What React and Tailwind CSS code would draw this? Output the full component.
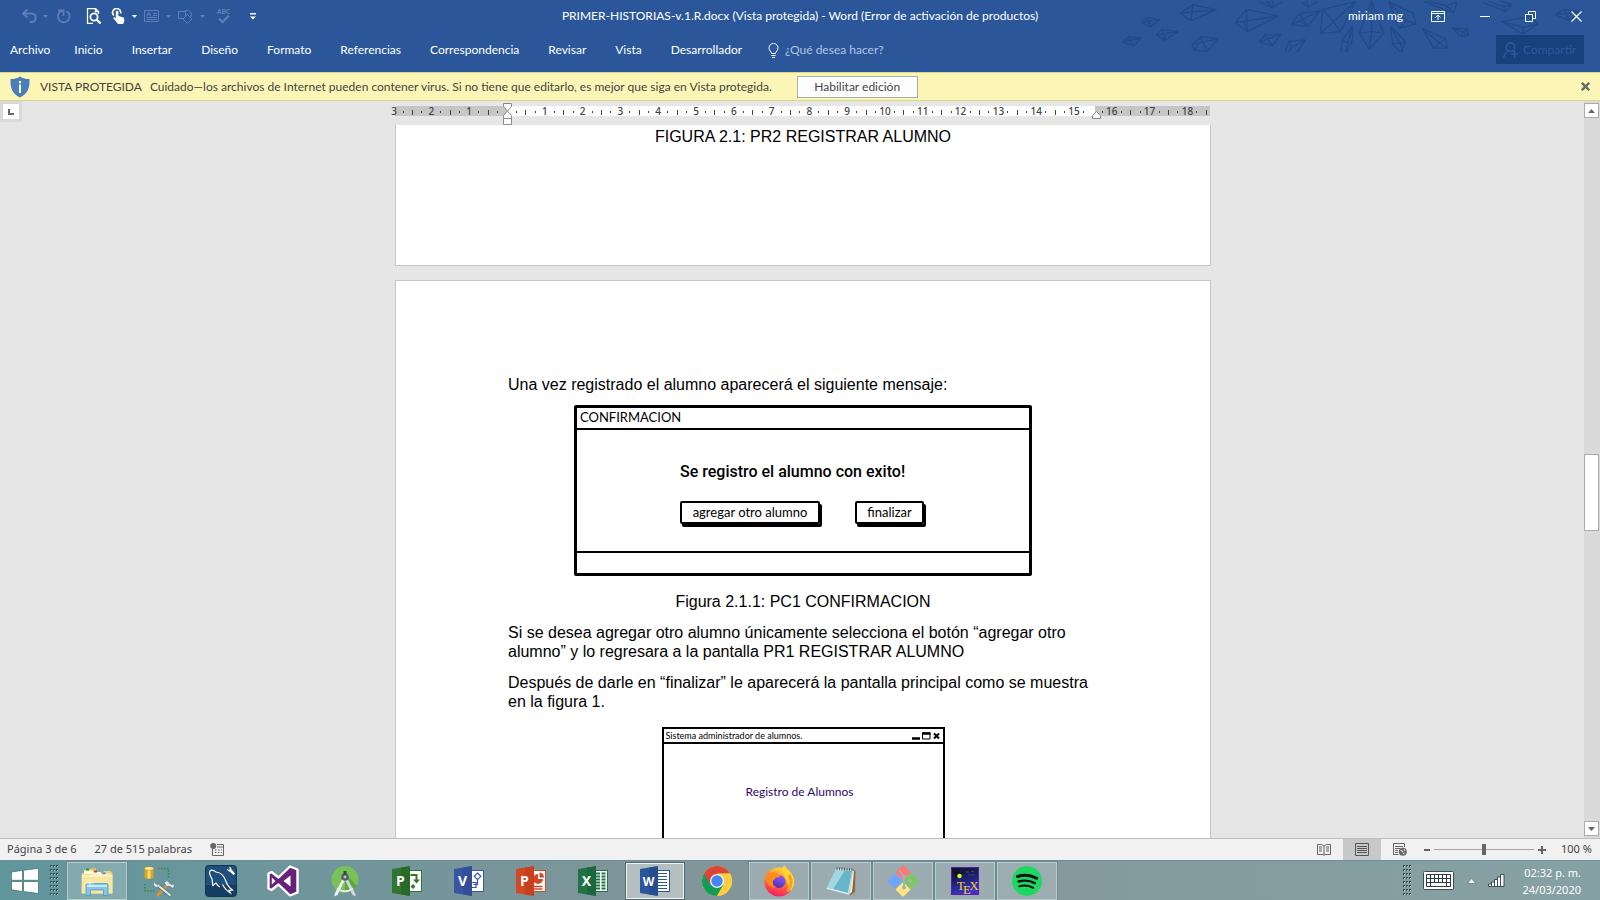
import React from 'react';

const TABS = ['Inicio', 'Insertar', 'Diseño', 'Formato', 'Referencias', 'Correspondencia', 'Revisar', 'Vista', 'Desarrollador'];

/* ---------- Title bar ---------- */

function Caret({ className = '' }) {
  return (
    <button type="button" aria-label="Más opciones" className={`flex w-3.5 justify-center ${className}`}>
      <svg width="5" height="3" viewBox="0 0 5 3" aria-hidden="true">
        <path d="M0 0h5L2.5 3z" fill="currentColor" />
      </svg>
    </button>
  );
}

function QuickButton({ label, className = '', children }) {
  return (
    <button type="button" aria-label={label} className={`size-4 ${className}`}>
      <svg width="16" height="16" viewBox="0 0 16 16" fill="none" stroke="currentColor" aria-hidden="true">
        {children}
      </svg>
    </button>
  );
}

function QuickAccess() {
  return (
    <div className="flex items-center pl-[22px] text-[#5b7fb5]">
      <QuickButton label="Deshacer">
        <path d="M5.5 1.5 1 5.5l4.5 4M1 5.500h8c3 0 4.700 1.800 4.700 4.200S12 14 9 14H7.500" strokeWidth="2" />
      </QuickButton>
      <Caret />
      <QuickButton label="Rehacer" className="ml-1">
        <path d="M10.500 3.300A5.800 5.800 0 1 1 3.800 4.200L6.500 2.800M2 2.500h5.500V8" strokeWidth="1.800" />
      </QuickButton>
      <QuickButton label="Vista previa de impresión" className="ml-3.5 text-white">
        <path d="M7 15.500H1.500V.5h8l3 3V6M9.500.5v3h3" strokeWidth="1.300" />
        <circle cx="8" cy="9" r="3.600" strokeWidth="1.800" />
        <path d="m10.500 11.500 4 4" strokeWidth="2.400" />
      </QuickButton>
      <QuickButton label="Modo mouse o toque" className="ml-[9px] text-white">
        <path d="M3 7.500A4 4 0 1 1 9.500 5.500" strokeWidth="1.600" />
        <path
          d="M4.800 3.800c0-1.400 2.600-1.400 2.600 0V8l4.500 1.300c1 .3 1.300.9 1.300 1.700v2l-1 3H7l-4.500-5.500c-.6-.9.600-1.700 1.400-1l.9.800z"
          fill="currentColor"
          stroke="none"
        />
      </QuickButton>
      <Caret className="text-white" />
      <QuickButton label="Cuadro de texto" className="ml-[3px]">
        <path d="M.5 2.500h14v11H.5z" />
        <path d="M9 5.500h4M9 7.500h4M2.500 9.500H13M2.500 11.500H13M2.700 8.200 4.800 4l2.100 4.200M3.500 6.700h2.600" />
      </QuickButton>
      <Caret className="ml-px" />
      <QuickButton label="Formas" className="ml-[3px]">
        <path d="M.5 3.500h7v7h-7zM5.500 4a4.300 4.300 0 1 1 7 5.500" />
        <path d="m9.500 6.500 4.500 4.500-4.500 4.500L5 11z" fill="#2b579a" />
      </QuickButton>
      <Caret className="ml-px" />
      <QuickButton label="Ortografía" className="ml-[7px]">
        <text x="1" y="5.500" fontFamily="Noto Sans, sans-serif" fontSize="6.500" fontWeight="700" fill="currentColor" stroke="none">
          ABC
        </text>
        <path d="m3 10.500 3.500 3.500L13 7.500" strokeWidth="2.400" />
      </QuickButton>
      <button type="button" aria-label="Personalizar barra de acceso rápido" className="ml-3.5 flex w-3.5 justify-center text-white">
        <svg width="6" height="7" viewBox="0 0 6 7" aria-hidden="true">
          <path d="M0 0h6v1.500H0zM0 3.500h6l-3 3z" fill="currentColor" />
        </svg>
      </button>
    </div>
  );
}

function HeaderPattern() {
  return (
    <svg
      className="pointer-events-none absolute top-0 right-0"
      width="500"
      height="52"
      viewBox="0 0 1500 156"
      fill="none"
      stroke="#214b88"
      strokeWidth="4"
      strokeLinejoin="round"
      aria-hidden="true"
    >
      <path d="M125 68 140 52 179 59 151 81ZM125 68 179 59M140 52 151 81 148 66" />
      <path d="M169 104 186 88 234 95 193 121ZM169 104 234 95M186 88 193 121 200 99" />
      <path d="M68 126 85 111 122 114 101 138ZM68 126 122 114M85 111 101 138" />
      <path d="M240 39 278 15 349 29 273 62ZM240 39 349 29M278 15 273 62" />
      <path d="M276 134 302 110 354 115 322 155 284 151ZM276 134 354 115M302 110 322 155M300 126 284 151" />
      <path d="M406 68 439 28 535 48 443 95ZM406 68 535 48M439 28 443 95M430 64 443 95" />
      <path d="M479 6 515 23 546 6M500 3 515 23 520 3M606 8 626 21 650 5M620 3 626 21" />
      <path d="M478 126 495 105 542 103 517 138ZM478 126 542 103M495 105 517 138" />
      <path d="M574 74 598 40 662 32 623 79ZM574 74 662 32M598 40 623 79M598 60 623 79" />
      <path d="M556 156 566 125 616 120 592 156M566 125 574 142 616 120M574 142 566 156" />
      <path d="M662 100 668 28 766 5 722 95ZM662 100 700 65 766 5M668 28 700 65 722 95" />
      <path d="M724 155 726 122 757 78 757 120 742 156M726 122 744 128 757 78M744 128 738 156" />
      <path d="M815 3 778 100 808 147 851 100ZM778 100 815 94 851 100M815 3V94L808 147" />
      <path d="M866 5 897 85 948 72 940 40ZM866 5 920 62 948 72M920 62 897 85" />
      <path d="M871 78 878 132 902 156 917 126ZM871 78 900 130 917 126M878 132 900 130 910 156" />
      <path d="M968 86 1001 145 1042 144 1038 117ZM968 86 1018 128 1042 144M1001 145 1018 128 1038 117" />
      <path d="M972 5 1061 39 1071 5M985 3 1040 18 1061 39M1040 18 1071 5" />
      <path d="M1057 83 1083 110 1106 106 1103 87ZM1057 83 1090 97 1106 106M1083 110 1090 97 1103 87" />
      <path d="M1150 8 1217 34 1236 14 1200 3M1165 3 1210 20 1217 34M1210 20 1236 14" />
      <path d="M1206 64 1268 102 1313 72 1290 50ZM1206 64 1270 82 1313 72M1270 82 1268 102" />
      <path d="M1366 43 1393 28 1440 36 1408 62ZM1366 43 1440 36M1393 28 1408 62" />
    </svg>
  );
}

function TitleBar() {
  return (
    <div className="relative grid h-8 grid-cols-[1fr_auto_1fr]">
      <QuickAccess />
      <h1 className="self-center text-center leading-4">
        PRIMER-HISTORIAS-v.1.R.docx (Vista protegida) - Word (Error de activación de productos)
      </h1>
      <div className="flex items-center justify-end pr-[18px]">
        <span className="mr-7 leading-4">miriam mg</span>
        <button type="button" aria-label="Opciones de presentación de la cinta de opciones" className="mr-[35px]">
          <svg width="14" height="11" viewBox="0 0 14 11" fill="none" stroke="currentColor" aria-hidden="true">
            <path d="M.5.5h13v10H.5zM.5 2.500h13M7 9V4.500M4.500 6.500 7 4.200l2.500 2.300" />
          </svg>
        </button>
        <button type="button" aria-label="Minimizar" className="mr-[35px]">
          <svg width="10" height="11" viewBox="0 0 10 11" stroke="currentColor" aria-hidden="true">
            <path d="M0 5.500h10" />
          </svg>
        </button>
        <button type="button" aria-label="Restaurar" className="mr-[35px]">
          <svg width="11" height="11" viewBox="0 0 11 11" fill="none" stroke="currentColor" aria-hidden="true">
            <path d="M.5 3.500h7v7h-7zM3.500 3.500v-3h7v7h-3" />
          </svg>
        </button>
        <button type="button" aria-label="Cerrar">
          <svg width="11" height="11" viewBox="0 0 11 11" stroke="currentColor" strokeWidth="1.200" aria-hidden="true">
            <path d="m.5.5 10 10M10.500.5l-10 10" />
          </svg>
        </button>
      </div>
    </div>
  );
}

function RibbonTabs() {
  return (
    <div className="relative flex h-10 items-start justify-between">
      <div className="flex pt-[9px] pl-2.5 leading-[18px]">
        <nav className="flex">
          <button type="button" className="mr-6">Archivo</button>
          <div className="flex gap-[29px]">
            {TABS.map((t) => (
              <button type="button" key={t}>{t}</button>
            ))}
          </div>
        </nav>
        <div className="ml-[26px] flex items-center gap-1.5">
          <svg width="11" height="15" viewBox="0 0 11 15" fill="none" stroke="#fff" aria-hidden="true">
            <path d="M3.500 10.500C3.500 8.500 1 7.700 1 4.900a4.500 4.500 0 0 1 9 0c0 2.800-2.500 3.600-2.500 5.600zM3.500 12.500h4M4 14.500h3" />
          </svg>
          <input
            type="text"
            aria-label="¿Qué desea hacer?"
            placeholder="¿Qué desea hacer?"
            className="h-[18px] w-32 bg-transparent p-0 outline-none placeholder:text-[#b4c5e2]"
          />
        </div>
      </div>
      <button
        type="button"
        disabled
        className="mt-[3px] mr-4 flex h-[29px] w-[88px] items-center gap-1 bg-[#15417d] pl-[7px] text-[#2b5a9d]"
      >
        <svg width="16" height="16" viewBox="0 0 16 16" fill="none" stroke="currentColor" strokeWidth="1.400" aria-hidden="true">
          <circle cx="7.500" cy="5" r="4.200" />
          <path d="M.7 15.500c.3-3 1.800-5 4.300-6.500M8 12h7M11.500 8.500v7M9 8.800l1.500.7" />
        </svg>
        <span className="leading-4">Compartir</span>
      </button>
    </div>
  );
}

function ProtectedBar() {
  return (
    <div className="flex h-[29px] shrink-0 items-center border-y border-[#d9d78b] bg-[#fcf6b6] pr-2.5 pl-2.5 text-[#444]">
      <svg width="20" height="22" viewBox="0 0 20 22" aria-hidden="true">
        <path d="M10 .5C7.500 2.500 3.500 3 .5 3c-.3 8.500 1.500 15 9.500 18.500C18 18 19.800 11.500 19.500 3c-3 0-7-.5-9.500-2.500z" fill="#4a7ebb" />
        <path d="M9 5h2v2.200H9zM9 8.500h2V17H9z" fill="#fff" />
      </svg>
      <span className="ml-2.5">VISTA PROTEGIDA</span>
      <span className="ml-2">
        Cuidado—los archivos de Internet pueden contener virus. Si no tiene que editarlo, es mejor que siga en Vista protegida.
      </span>
      <button type="button" className="ml-[25px] h-[22px] w-[121px] border border-[#ababab] bg-[#fdfdfd]">
        Habilitar edición
      </button>
      <button type="button" aria-label="Cerrar mensaje" className="ml-auto">
        <svg width="9" height="9" viewBox="0 0 9 9" stroke="#6a6a6a" strokeWidth="2.400" aria-hidden="true">
          <path d="m.8.8 7.400 7.400M8.200.8.800 8.200" />
        </svg>
      </button>
    </div>
  );
}

/* ---------- Ruler ---------- */

const CM = 37.8;
const ORIGIN = 112.5;

function Ruler() {
  const marks = [];
  for (let q = -11; q <= 74; q += 1) {
    const x = ORIGIN + (q * CM) / 4;
    if (q === 0 || q === 62) continue;
    if (q % 4 === 0) {
      marks.push(
        <text key={q} x={x - 0.5} y="14" textAnchor="middle">{Math.abs(q / 4)}</text>
      );
    } else if (q % 2 === 0) {
      marks.push(<rect key={q} x={Math.round(x) - 1} y="9" width="1" height="5" />);
    } else {
      marks.push(<rect key={q} x={Math.round(x) - 1} y="10" width="1" height="2" />);
    }
  }
  return (
    <svg
      width="816"
      height="24"
      viewBox="0 0 816 24"
      className="mx-auto block overflow-visible"
      fontFamily="Noto Sans, sans-serif"
      fontSize="10"
      fontWeight="500"
      fill="#444"
      role="img"
      aria-label="Regla"
    >
      <rect x="0" y="5" width="815" height="10" fill="#c6c6c6" />
      <rect x="112" y="5" width="588" height="10" fill="#fff" />
      <text x={ORIGIN - 3 * CM} y="14" textAnchor="middle">3</text>
      {marks}
      <g fill="#fff" stroke="#8a8a8a">
        <path d="M108.500 2.500h8v3l-4 4.500-4-4.500zM108.500 17.500v-3l4-4.500 4 4.500v3zM108.500 17.500h8v6h-8z" />
        <path d="M697.500 17.500v-3l4-4 4 4v3z" />
      </g>
    </svg>
  );
}

/* ---------- Document ---------- */

function ConfirmationMock() {
  return (
    <div className="mx-auto mt-[11px] flex h-[171px] w-[458px] flex-col rounded-xs border-[3px] border-black font-[Lato,sans-serif] text-[13px] leading-4 text-black">
      <div className="border-b-2 border-black pt-px pb-[3px] pl-[3px]">CONFIRMACION</div>
      <div className="flex-1 pt-[31px] pl-[103px]">
        <p className="font-[Roboto,sans-serif] text-base leading-[21px] font-medium">Se registro el alumno con exito!</p>
        <div className="mt-[19px] flex gap-[35px]">
          <button type="button" className="h-[23px] w-[140px] rounded-xs border-2 border-black pb-px shadow-[2px_3px_0_#000]">
            agregar otro alumno
          </button>
          <button type="button" className="h-[23px] w-[69px] rounded-xs border-2 border-black pb-px shadow-[2px_3px_0_#000]">
            finalizar
          </button>
        </div>
      </div>
      <div className="h-[22px] border-t-2 border-black" />
    </div>
  );
}

function SystemMock() {
  return (
    <div className="mx-auto mt-4 h-72 w-[283px] border-2 border-black font-[Lato,sans-serif] text-black">
      <div className="flex h-[15px] items-center justify-between border-b-2 border-black pr-[3px] pl-0.5 text-[9px] leading-3">
        <span>Sistema administrador de alumnos.</span>
        <svg width="28" height="8" viewBox="0 0 28 8" fill="none" stroke="#000" aria-hidden="true">
          <path d="M0 6.500h8" strokeWidth="2.500" />
          <path d="M10.500 7V1h7.500v6z" />
          <path d="M10 1.500h8.500" strokeWidth="2.500" />
          <path d="m22 1.500 5 5M27 1.500l-5 5" strokeWidth="2" />
        </svg>
      </div>
      <p className="pt-10 pl-[82px] text-xs leading-4 text-[#2b0a6e]">Registro de Alumnos</p>
    </div>
  );
}

function Document() {
  return (
    <div className="flex min-h-0 flex-1 bg-[#e6e6e6]">
      <div className="w-[22px] shrink-0">
        <button type="button" aria-label="Tabulación izquierda" className="flex h-[21px] w-full items-center justify-center border-3 border-[#dadada] bg-white">
          <svg width="6" height="6" viewBox="0 0 6 6" fill="none" stroke="#666" strokeWidth="2" aria-hidden="true">
            <path d="M1 0v5h5" />
          </svg>
        </button>
      </div>
      <div className="flex min-w-0 flex-1 flex-col">
        <Ruler />
        <div className="flex min-h-0 flex-1 flex-col overflow-hidden font-['Liberation_Sans',Arial,sans-serif] text-base leading-[19px] text-black">
          <section className="mx-auto h-[141px] w-[816px] shrink-0 border border-t-0 border-[#c6c6c6] bg-white pt-0.5">
            <p className="text-center">FIGURA 2.1: PR2 REGISTRAR ALUMNO</p>
          </section>
          <section className="mx-auto mt-3.5 w-[816px] shrink-0 border border-[#c6c6c6] bg-white px-28 pt-[94px]">
            <p>Una vez registrado el alumno aparecerá el siguiente mensaje:</p>
            <ConfirmationMock />
            <p className="mt-4 text-center">Figura 2.1.1: PC1 CONFIRMACION</p>
            <p className="mt-3">
              Si se desea agregar otro alumno únicamente selecciona el botón “agregar otro alumno” y lo regresara a la
              pantalla PR1 REGISTRAR ALUMNO
            </p>
            <p className="mt-3">
              Después de darle en “finalizar” le aparecerá la pantalla principal como se muestra en la figura 1.
            </p>
            <SystemMock />
          </section>
        </div>
      </div>
      <div className="flex w-4 shrink-0 flex-col bg-[#dadada] pt-0.5 pr-px pb-0.5">
        <button type="button" aria-label="Desplazar hacia arriba" className="flex h-[15px] items-center justify-center border border-[#ababab] bg-white">
          <svg width="7" height="4" viewBox="0 0 7 4" aria-hidden="true">
            <path d="M3.500 0 7 4H0z" fill="#666" />
          </svg>
        </button>
        <div className="flex flex-1 flex-col">
          <div className="grow-337" />
          <div className="h-[77px] border border-[#ababab] bg-white" />
          <div className="grow-290" />
        </div>
        <button type="button" aria-label="Desplazar hacia abajo" className="flex h-[15px] items-center justify-center border border-[#ababab] bg-white">
          <svg width="7" height="4" viewBox="0 0 7 4" aria-hidden="true">
            <path d="M0 0h7L3.500 4z" fill="#666" />
          </svg>
        </button>
      </div>
    </div>
  );
}

/* ---------- Status bar ---------- */

function StatusBar() {
  return (
    <div className="flex h-[22px] shrink-0 items-center border-t border-[#bdbdbd] bg-[#f1f1f1] pr-[9px] pl-[7px] font-['Noto_Sans',sans-serif] text-[11px] text-[#444]">
      <span>Página 3 de 6</span>
      <span className="ml-[18px]">27 de 515 palabras</span>
      <button type="button" aria-label="Grabar macro" className="ml-[18px]">
        <svg width="14" height="13" viewBox="0 0 14 13" fill="none" stroke="#666" aria-hidden="true">
          <path d="M7 1.500h6.500v11h-11V6M7 4h6.500" />
          <path d="M5 7h1.500M8 7h1.500M11 7h1M5 9.500h1.500M8 9.500h1.500M11 9.500h1" />
          <circle cx="3.200" cy="3" r="3" fill="#666" stroke="none" />
        </svg>
      </button>
      <div className="ml-auto flex h-full items-center">
        <button type="button" aria-label="Modo de lectura" className="flex h-full w-[38px] items-center justify-center">
          <svg width="14" height="13" viewBox="0 0 14 13" fill="none" stroke="#666" aria-hidden="true">
            <path d="M6.500 11.500h-6V1.500h4L7 3l2.500-1.500h4v10h-6M7 3v10" />
            <path d="M2 4h3M2 6h3M2 8h3M9 4h3M9 6h3M9 8h3" />
          </svg>
        </button>
        <button type="button" aria-label="Diseño de impresión" className="flex h-full w-[38px] items-center justify-center bg-[#c8c8c8]">
          <svg width="14" height="13" viewBox="0 0 14 13" fill="none" stroke="#555" aria-hidden="true">
            <path d="M.5.5h13v12H.5zM2 3.500h10M2 5.500h10M2 7.500h10M2 9.500h10" />
          </svg>
        </button>
        <button type="button" aria-label="Diseño web" className="flex h-full w-[38px] items-center justify-center">
          <svg width="14" height="13" viewBox="0 0 14 13" fill="none" stroke="#666" aria-hidden="true">
            <path d="M5.500 11.500h-5V.5h11V4M2 3.500h8M2 5.500h5M2 7.500h3M2 9.500h3" />
            <circle cx="9.800" cy="8.800" r="4" fill="#666" stroke="none" />
            <path d="M7.500 7.500l2 .5.5 1.500M11 6l1 2M10 11l1.500-.8" stroke="#f1f1f1" />
          </svg>
        </button>
        <button type="button" aria-label="Alejar" className="ml-[5px]">
          <svg width="6" height="8" viewBox="0 0 6 8" stroke="#666" strokeWidth="2" aria-hidden="true">
            <path d="M0 4h6" />
          </svg>
        </button>
        <input
          type="range"
          aria-label="Zoom"
          min="0"
          max="100"
          defaultValue="50"
          className="mx-1 h-3 w-[100px] appearance-none bg-[linear-gradient(#a6a6a6,#a6a6a6)] bg-[length:100%_1px] bg-center bg-no-repeat [&::-webkit-slider-thumb]:h-[11px] [&::-webkit-slider-thumb]:w-1 [&::-webkit-slider-thumb]:appearance-none [&::-webkit-slider-thumb]:bg-[#666]"
        />
        <button type="button" aria-label="Acercar">
          <svg width="8" height="8" viewBox="0 0 8 8" stroke="#666" strokeWidth="2" aria-hidden="true">
            <path d="M0 4h8M4 0v8" />
          </svg>
        </button>
        <span className="ml-[15px] w-[30px] text-right whitespace-nowrap">100 %</span>
      </div>
    </div>
  );
}

/* ---------- Taskbar ---------- */

function Grip() {
  return (
    <svg width="9" height="31" viewBox="0 0 9 31" aria-hidden="true">
      {[0, 4, 8, 12, 16, 20, 24, 28].map((y) => (
        <g key={y}>
          <path d={`M0 ${y}h2v2H0zM3 ${y}h2v2H3zM6 ${y}h2v2H6z`} fill="#2f4d50" />
          <path d={`M1 ${y + 1}h1v1H1zM4 ${y + 1}h1v1H4zM7 ${y + 1}h1v1H7z`} fill="#b9cdd0" />
        </g>
      ))}
    </svg>
  );
}

function OfficeIcon({ color, dark, letter, children }) {
  return (
    <g>
      <rect x="14.500" y="5.500" width="16" height="21" fill="#fff" stroke={color} />
      {children}
      <path d="M1 4 19 1v30L1 28z" fill={color} />
      <path d="M10 2.500 19 1v30l-9-1.500z" fill={dark} opacity=".4" />
      <text x="9.500" y="20.500" textAnchor="middle" fontFamily="Open Sans, sans-serif" fontWeight="700" fontSize={letter === 'W' ? 12 : 14} fill="#fff">
        {letter}
      </text>
    </g>
  );
}

const APPS = [
  {
    name: 'Explorador de archivos',
    state: 'open',
    icon: (
      <g>
        <path d="M3 5h5l1-1.500h6V27H3z" fill="#e9c95f" />
        <path d="M1 8h20l2-2h7l1.500 2v19c0 1-.5 1.500-1.500 1.500H2C1 28.500.5 28 .5 27z" fill="#eecf6e" />
        <path d="M3 5.500h9V9H3zM11 7h9v3h-9zM19 8.500h10V12H19z" fill="#fff8dc" />
        <path d="M5 3.500h3v2H5z" fill="#17a12b" />
        <path d="M13 5.500h3v2h-3z" fill="#d23a2e" />
        <path d="M21.500 7.500h3v2h-3z" fill="#2c8fe0" />
        <path d="M.8 9.500h30.700V27c0 1-.5 1.500-1.500 1.500H2.300C1.300 28.500.8 28 .8 27z" fill="#f8e7a0" />
        <path d="M1 10h30v1.500H1z" fill="#fff6cf" />
        <path d="M5 20c0-1 .5-1.500 1.500-1.500h19c1 0 1.500.5 1.500 1.500v10.500h-4.500V25h-13v5.500H5z" fill="#82c6e8" stroke="#4c9bc7" strokeWidth=".8" />
        <path d="M6 20h20v2H6z" fill="#c6e8f8" />
        <path d="M9 14v8M5 18h8" stroke="#fff" strokeWidth=".8" />
      </g>
    ),
  },
  {
    name: 'Herramientas de base de datos',
    icon: (
      <g>
        <path d="M1.500 3.500v9c0 1.700 9 1.700 9 0v-9z" fill="#dfa51f" />
        <path d="M4.500 4v9.500c1 .2 2 .2 3 0V4z" fill="#f9dd77" />
        <ellipse cx="6" cy="3.500" rx="4.500" ry="1.800" fill="#fdf0a8" stroke="#b8860b" strokeWidth=".6" />
        <path d="M15 3.500h10.500V14M2 19v7h9" fill="none" stroke="#2c8f2f" strokeWidth="1.500" strokeDasharray="1.500 1.500" />
        <path d="m14 31 10-11" stroke="#e0952c" strokeWidth="3" />
        <path d="M21 17.500 24 15.500l4 4 2.500-.5 1 2-1.500 2.500-4-2.500-2 1z" fill="#dfe9ee" stroke="#5f7883" strokeWidth=".7" />
        <path d="m14.500 20 13 10.500" stroke="#59707a" strokeWidth="3.600" />
        <path d="m14.500 20 13 10.500" stroke="#e1ebee" strokeWidth="2.200" />
        <path d="M12 16.500c-2 1-2 4.500.5 5.500s5-1 4-3.500l-2 1.500-2-1.500z" fill="#e7eff2" stroke="#5f7883" strokeWidth=".7" />
      </g>
    ),
  },
  {
    name: 'MySQL Workbench',
    icon: (
      <g>
        <rect x="0.500" y="0.500" width="31" height="31" rx="3" fill="#1f4f7c" stroke="#16344f" />
        <path d="M1 20h30v8.500a2.500 2.500 0 0 1-2.500 2.500h-25A2.500 2.500 0 0 1 1 28.500z" fill="#153d64" />
        <path
          d="M8 21c-1-3 0-5-1.500-8C5 10 3.500 8 5 6c1.500-1.500 4-.5 6 1 5 .5 8.500 5 10 9.500.8 2.500 2 4.500 4 6.500l2.500 2-3.500.3 1.500 2.700c-4-2-6-5-8-8.500M8 21c1-1.500 1.500-2.500 3-3 1 2 2.500 3.500 4 4"
          fill="none"
          stroke="#fff"
          strokeWidth="1.200"
        />
        <path d="M22 3.500c0 1.500 1 3 2.500 3l4 3.500 1.500-1.500-3.500-4c0-1.500-1-3-2.500-2.500l1 2-1.300 1z" fill="#fff" />
      </g>
    ),
  },
  {
    name: 'Visual Studio',
    icon: (
      <g>
        <path d="M23 1.500 30.500 4.500v23L23 30.500 11.500 19.500 4.500 25 1.500 23.500v-15L4.500 7l7 5.500z" fill="#68217a" stroke="#fff" strokeWidth="2.400" strokeLinejoin="round" />
        <path d="M23.500 10.500v11L16.500 16zM4.800 12.500v7L8.500 16z" fill="#fff" />
      </g>
    ),
  },
  {
    name: 'Android Studio',
    icon: (
      <g>
        <circle cx="16" cy="14.500" r="13.500" fill="#78c257" />
        <path d="M16 8 28 21a13.500 13.500 0 0 1-12 7z" fill="#5da544" />
        <path d="M15 11 5.500 29v2.500L8.500 30 17 13z" fill="#eceff1" />
        <path d="m17 11 9.500 18v2.500L23.500 30 15 13z" fill="#cfd8dc" />
        <path d="M8 23.500c5 3.500 11 3.500 16 0" fill="none" stroke="#e4e9eb" strokeWidth="2" />
        <circle cx="16" cy="12" r="3.800" fill="#546169" />
        <path d="M14.500 6h3v4h-3z" fill="#39444b" />
        <circle cx="16" cy="12" r="1.400" fill="#b9c4c9" />
      </g>
    ),
  },
  {
    name: 'Project',
    icon: (
      <OfficeIcon color="#31752f" dark="#1f5a1f" letter="P">
        <path d="M19.500 10h6v6" fill="none" stroke="#31752f" strokeWidth="2" />
        <path d="M22 14.500h7l-3.500 4zM22 19l2.500 2.500L22 24l-2.500-2.500z" fill="#31752f" />
      </OfficeIcon>
    ),
  },
  {
    name: 'Visio',
    icon: (
      <OfficeIcon color="#3955a3" dark="#2a4088" letter="V">
        <path d="m24.500 8 3.300 3.300-3.300 3.300-3.300-3.300zM24.500 15v4.500h-4M18 17.500h5v5h-5" fill="none" stroke="#3955a3" strokeWidth="1.200" />
      </OfficeIcon>
    ),
  },
  {
    name: 'PowerPoint',
    icon: (
      <OfficeIcon color="#d24726" dark="#b3371a" letter="P">
        <path d="M23 9a5 5 0 1 0 5 5h-5z" fill="#d24726" />
        <path d="M24.500 7.500a5 5 0 0 1 4.500 5h-4.500z" fill="#d24726" />
        <path d="M19 21.500h8.500M19 24h8.500" stroke="#d24726" strokeWidth="1.300" />
      </OfficeIcon>
    ),
  },
  {
    name: 'Excel',
    icon: (
      <OfficeIcon color="#217346" dark="#155633" letter="X">
        <path d="M19 8.500h4M19 11.500h4M19 14.500h4M19 17.500h4M19 20.500h4M19 23.500h4M24.500 8.500h4M24.500 11.500h4M24.500 14.500h4M24.500 17.500h4M24.500 20.500h4M24.500 23.500h4" stroke="#217346" strokeWidth="1.800" />
      </OfficeIcon>
    ),
  },
  {
    name: 'Word',
    state: 'active',
    icon: (
      <OfficeIcon color="#2b579a" dark="#1c4179" letter="W">
        <path d="M19 8.500h9M19 11.500h9M19 14.500h9M19 17.500h9M19 20.500h9M19 23.500h9" stroke="#2b579a" strokeWidth="1.200" />
      </OfficeIcon>
    ),
  },
  {
    name: 'Google Chrome',
    icon: (
      <g>
        <circle cx="16" cy="16" r="15" fill="#ffcd40" />
        <path d="M16 16 3 8.500A15 15 0 0 0 16 31l6.500-11.300z" fill="#0f9d58" />
        <path d="M3 8.500A15 15 0 0 1 29 8.500L16 9l-6.500 11.200z" fill="#db4437" />
        <path d="M16 8.500h13A15 15 0 0 1 16 31l6.500-11z" fill="#ffcd40" />
        <circle cx="16" cy="16" r="7" fill="#f1f1f1" />
        <circle cx="16" cy="16" r="5.700" fill="#4285f4" />
      </g>
    ),
  },
  {
    name: 'Firefox',
    state: 'open',
    icon: (
      <g>
        <circle cx="16" cy="17" r="14.500" fill="url(#fx-fire)" />
        <path d="M19 6c.2-3 1.200-5 2.500-6 .8 3.500 8 6.500 9.500 14 .8 4-.5 9-3.500 12L22 12z" fill="#ffd52e" />
        <path d="M26 10c3 5 3 12-2 16" fill="none" stroke="#ff9a2a" strokeWidth="3" />
        <circle cx="16" cy="16.500" r="6.500" fill="url(#fx-globe)" />
        <path d="M2 12C2.500 9 4 7 5 5.500c.5 1.500 1 2 2 2.500 3-1.500 6-1 8 1l2 2.500c-1.500 1-2.500 1-4 1.200-1.500.8-1.500 2-3 2.800C9 18 10 21 13 22c-4 1.500-8-1-9-5z" fill="#ff8a1e" />
      </g>
    ),
  },
  {
    name: 'Bloc de notas',
    state: 'open',
    icon: (
      <g>
        <path d="M28 4.500 30.500 6 30 27l-5 3.500z" fill="#8d6a3b" />
        <path d="M27 5 29 6l-2 21-4 3z" fill="#f1ede0" />
        <path d="M11 3.500 27.500 5 24 30 1 24z" fill="#e6f3f5" stroke="#8aa" strokeWidth=".5" />
        <path d="M11 4.500 27 6l-4 22L2 22.500z" fill="#66b6c9" />
        <path d="M11 4.500 20 5.300 8 24.200 2 22.500z" fill="#b7e0e8" opacity=".75" />
        <path d="M12 2v3M14.500 2.200v3M17 2.400v3M19.500 2.600v3M22 2.800v3M24.500 3v3M27 3.200v3" stroke="#666" strokeWidth="1" />
      </g>
    ),
  },
  {
    name: 'Git',
    state: 'open',
    icon: (
      <g>
        <path d="m16 0 7.500 7.500-5.500 5.500L16 15 8.500 7.500z" fill="#ff7575" />
        <path d="m8 8.500 7.500 7.500L8 23.500.5 16z" fill="#6fa4ff" />
        <path d="m24 8.500 7.500 7.500-7.500 7.500-7.500-7.500z" fill="#7cc95a" />
        <path d="m16 17 7.500 7.500L16 32l-7.500-7.500z" fill="#ffe680" />
        <path d="m12 5.500 5 5.500v11" fill="none" stroke="#9fb4b8" strokeWidth="1.800" />
        <circle cx="17" cy="12" r="2" fill="#9fb4b8" />
        <circle cx="23" cy="16" r="2" fill="#9fb4b8" />
        <circle cx="17" cy="22.500" r="2" fill="#9fb4b8" />
      </g>
    ),
  },
  {
    name: 'TeX',
    state: 'open',
    icon: (
      <g>
        <rect x="2.500" y="2.500" width="27" height="27" fill="url(#tex-bg)" stroke="#5a1f9a" />
        <path d="m4 5 4 2 1.500-3 1 4 4-1-3.500 5-4 1.500z" fill="#10131a" />
        <circle cx="10.500" cy="11" r="2.300" fill="#d9ee3a" />
        <path d="M17 7h3M22 6.500h3M19 10h7" stroke="#37457a" />
        <g fontFamily="Liberation Serif, serif" fontSize="12.500" fill="#ffd42a">
          <text x="8" y="25">T</text>
          <text x="14" y="28.500">E</text>
          <text x="20.500" y="25">X</text>
        </g>
      </g>
    ),
  },
  {
    name: 'Spotify',
    state: 'open',
    icon: (
      <g>
        <circle cx="16" cy="16" r="15" fill="#1ed760" />
        <path d="M6.500 11.500c6.500-1.900 13.500-1.300 19 1.700" stroke="#111" strokeWidth="3" strokeLinecap="round" fill="none" />
        <path d="M7.500 16.500c5.500-1.500 11.500-1 16.300 1.600" stroke="#111" strokeWidth="2.400" strokeLinecap="round" fill="none" />
        <path d="M8.300 21.200c4.700-1.200 9.700-.8 13.900 1.600" stroke="#111" strokeWidth="2" strokeLinecap="round" fill="none" />
      </g>
    ),
  },
];

const STATE_CLASS = {
  active: 'border-2 border-[#eef3f3] bg-[#b3bfc1] outline outline-[#56686b] -outline-offset-1',
  open: 'border border-[#b9cbcd] bg-white/20 outline outline-[#6d8a8e]',
};

function Taskbar() {
  return (
    <footer className="flex h-10 shrink-0 items-center border-t border-[#6b8f94] bg-linear-to-r from-[#5f969c] via-[#82959a] via-45% to-[#86a1a5] pr-[19px] pl-[11px]">
      <svg width="0" height="0" className="absolute" aria-hidden="true">
        <defs>
          <linearGradient id="fx-fire" x1="0.7" y1="0" x2="0.4" y2="1">
            <stop offset="0" stopColor="#ffd83a" />
            <stop offset=".45" stopColor="#ff8a2a" />
            <stop offset=".8" stopColor="#ff3f52" />
            <stop offset="1" stopColor="#ec1c6c" />
          </linearGradient>
          <linearGradient id="fx-globe" x1="0.7" y1="0" x2="0.3" y2="1">
            <stop offset="0" stopColor="#9059ff" />
            <stop offset="1" stopColor="#4a2fb8" />
          </linearGradient>
          <linearGradient id="tex-bg" x1="0" y1="0" x2="0.3" y2="1">
            <stop offset="0" stopColor="#0d1226" />
            <stop offset=".5" stopColor="#1c1f6b" />
            <stop offset="1" stopColor="#3c34c8" />
          </linearGradient>
        </defs>
      </svg>
      <button type="button" aria-label="Inicio de Windows" className="mr-[11px]">
        <svg width="28" height="26" viewBox="0 0 28 26" fill="#fff" stroke="#47777c" strokeWidth=".8" aria-hidden="true">
          <path d="M.5 4 11.500 2.300v10H.5zM12.500 2.200 27.500.3v12h-15zM.5 13.500h11v10L.5 21.800zM12.500 13.500h15v12l-15-1.900z" />
        </svg>
      </button>
      <Grip />
      <div className="ml-2 flex gap-0.5">
        {APPS.map(({ name, state, icon }) => (
          <button
            type="button"
            key={name}
            aria-label={name}
            className={`flex h-[38px] w-[60px] items-center justify-center bg-clip-padding ${STATE_CLASS[state] ?? ''}`}
          >
            <svg width="32" height="32" viewBox="0 0 32 32" className="shrink-0" aria-hidden="true">
              {icon}
            </svg>
          </button>
        ))}
      </div>
      <div className="ml-auto flex items-center">
        <Grip />
        <button type="button" aria-label="Teclado táctil" className="ml-[11px]">
          <svg width="31" height="19" viewBox="0 0 31 19" fill="none" aria-hidden="true">
            <rect x=".5" y=".5" width="30" height="18" rx="1" fill="#fff" stroke="#3a4f52" />
            <path d="M3.500 3.500h24v12h-24zM3.500 7.500h24M3.500 11.500h24M7.500 3.500v12M11.500 3.500v8M15.500 3.500v8M19.500 3.500v8M23.500 3.500v12" stroke="#2b3b3e" />
          </svg>
        </button>
        <button type="button" aria-label="Mostrar iconos ocultos" className="ml-[13px]">
          <svg width="9" height="6" viewBox="0 0 9 6" aria-hidden="true">
            <path d="M4.500.5 8.500 5.500h-8z" fill="#fff" stroke="#5b777b" strokeWidth=".7" />
          </svg>
        </button>
        <svg className="ml-3" width="17" height="13" viewBox="0 0 17 13" fill="#fff" stroke="#3a4f52" role="img" aria-label="Red">
          <path d="M.5 10h3v2.500h-3zM3.500 8h3v4.500h-3zM6.500 5.500h3v7h-3zM9.500 3h3v9.500h-3zM12.500.5h3.500v12h-3.500z" />
        </svg>
        <div className="ml-[17px] text-right font-['Noto_Sans',sans-serif] text-[11px] leading-[17px] text-white">
          <p>02:32 p. m.</p>
          <p>24/03/2020</p>
        </div>
      </div>
    </footer>
  );
}

export default function App() {
  return (
    <div className="flex h-screen flex-col overflow-hidden font-[Lato,sans-serif] text-xs">
      <header className="relative h-[72px] shrink-0 bg-[#2b579a] text-white">
        <HeaderPattern />
        <TitleBar />
        <RibbonTabs />
      </header>
      <ProtectedBar />
      <Document />
      <StatusBar />
      <Taskbar />
    </div>
  );
}
